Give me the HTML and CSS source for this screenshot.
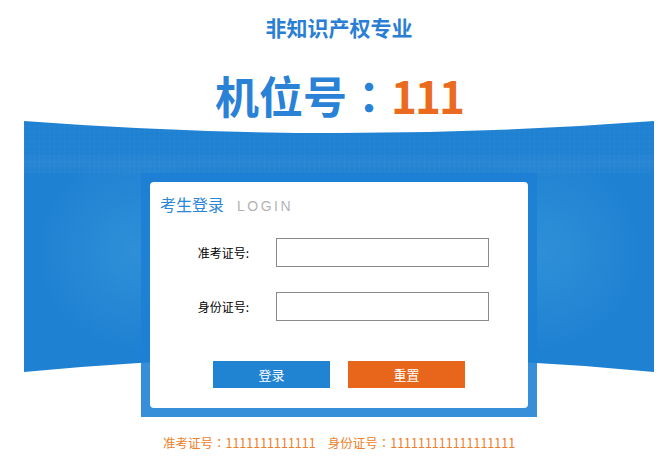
FILE: index.html
```html
<!DOCTYPE html>
<html lang="zh-CN">
<head>
	<meta charset="UTF-8">
	<title>考生登录</title>
	<link rel="stylesheet" href="styles.css">
</head>
<body>
	<div class="page">
		<h1 class="subject">非知识产权专业</h1>
		<h2 class="seat">机位号<span class="colon" lang="zh-TW">：</span><span class="seat-no">111</span></h2>

		<div class="stage">
			<div class="frame">
				<div class="card">
					<div class="card-title">考生登录<span class="en">LOGIN</span></div>
					<form class="form">
						<label class="label">准考证号:</label>
						<input class="field" type="text">
						<label class="label">身份证号:</label>
						<input class="field" type="text">
					</form>
					<div class="actions">
						<button class="btn btn-login" type="button">登录</button>
						<button class="btn btn-reset" type="button">重置</button>
					</div>
				</div>
			</div>
		</div>

		<p class="info">准考证号<span class="colon" lang="zh-TW">：</span>1111111111111<span class="gap"></span>身份证号<span class="colon" lang="zh-TW">：</span>111111111111111111</p>
	</div>
</body>
</html>
```

FILE: styles.css
```css
body {margin: 0; background: #fff; font-family: "Noto Sans CJK SC", "Liberation Sans", sans-serif;}
h1, h2, p {margin: 0;}

.page {width: 630px; margin-left: 24px;}
.colon {font-family: "Noto Sans CJK TC", sans-serif;}

.subject {margin-top: 12px; line-height: 30px; font-size: 21px; font-weight: bold; color: #2a7fd4; text-align: center;}
.seat {margin-top: 27px; line-height: 52px; font-size: 44px; font-weight: bold; color: #2a82d7; text-align: center;}
.seat-no {color: #ea6a20; letter-spacing: -2px;}

/* blue curved panel behind the login box */
.stage {position: relative; padding-top: 52px;}
.stage::before {
	content: ''; position: absolute; left: 0; top: 0; width: 630px; height: 251px;
	clip-path: path('M0 0 Q315 24 630 0 L630 251 Q315 221 0 251 Z');
	background:
		radial-gradient(circle at 112px 130px, rgba(70, 165, 225, 0.4), rgba(70, 165, 225, 0) 100px),
		radial-gradient(circle at 518px 130px, rgba(70, 165, 225, 0.4), rgba(70, 165, 225, 0) 100px),
		linear-gradient(to bottom, rgba(255, 255, 255, 0) 30px, rgba(255, 255, 255, 0.04) 42px, rgba(255, 255, 255, 0) 54px),
		repeating-linear-gradient(to right, rgba(255, 255, 255, 0.025) 0 1px, rgba(255, 255, 255, 0) 1px 5px),
		repeating-linear-gradient(to bottom, rgba(255, 255, 255, 0.025) 0 1px, rgba(255, 255, 255, 0) 1px 5px),
		#1f81d2;
	background-size: auto, auto, auto, 100% 55px, 100% 55px, auto;
	background-repeat: no-repeat;
}

.frame {position: relative; width: 378px; margin: 0 auto; padding: 9px; background: rgba(28, 128, 212, 0.88);}
.card {background: #fff; border-radius: 4px; padding: 12px 0 20px;}
.card-title {height: 20px; padding-left: 10px; line-height: 20px; font-size: 16px; color: #2b86d7;}
.card-title .en {margin-left: 13px; font-family: "Liberation Sans", sans-serif; font-size: 14px; letter-spacing: 2.5px; color: #b3b3b3;}

.form {display: grid; grid-template-columns: 99px 213px; column-gap: 27px; row-gap: 25px; align-items: center; margin-top: 24px;}
.label {text-align: right; font-size: 12px; color: #000;}
.field {box-sizing: border-box; width: 213px; height: 29px; margin: 0; border: 1px solid #8a8a8a; background: #fff; outline: none;}

.actions {display: flex; justify-content: center; gap: 18px; margin-top: 40px;}
.btn {width: 117px; height: 27px; border: 0; padding: 0; font-family: "Noto Sans CJK SC", sans-serif; font-size: 13px; color: #fff; cursor: pointer;}
.btn-login {background: #2184d3;}
.btn-reset {background: #e8661c;}

.info {margin-top: 17px; line-height: 18px; font-size: 12.5px; color: #ef7e2a; text-align: center;}
.info .gap {display: inline-block; width: 12px;}
```
